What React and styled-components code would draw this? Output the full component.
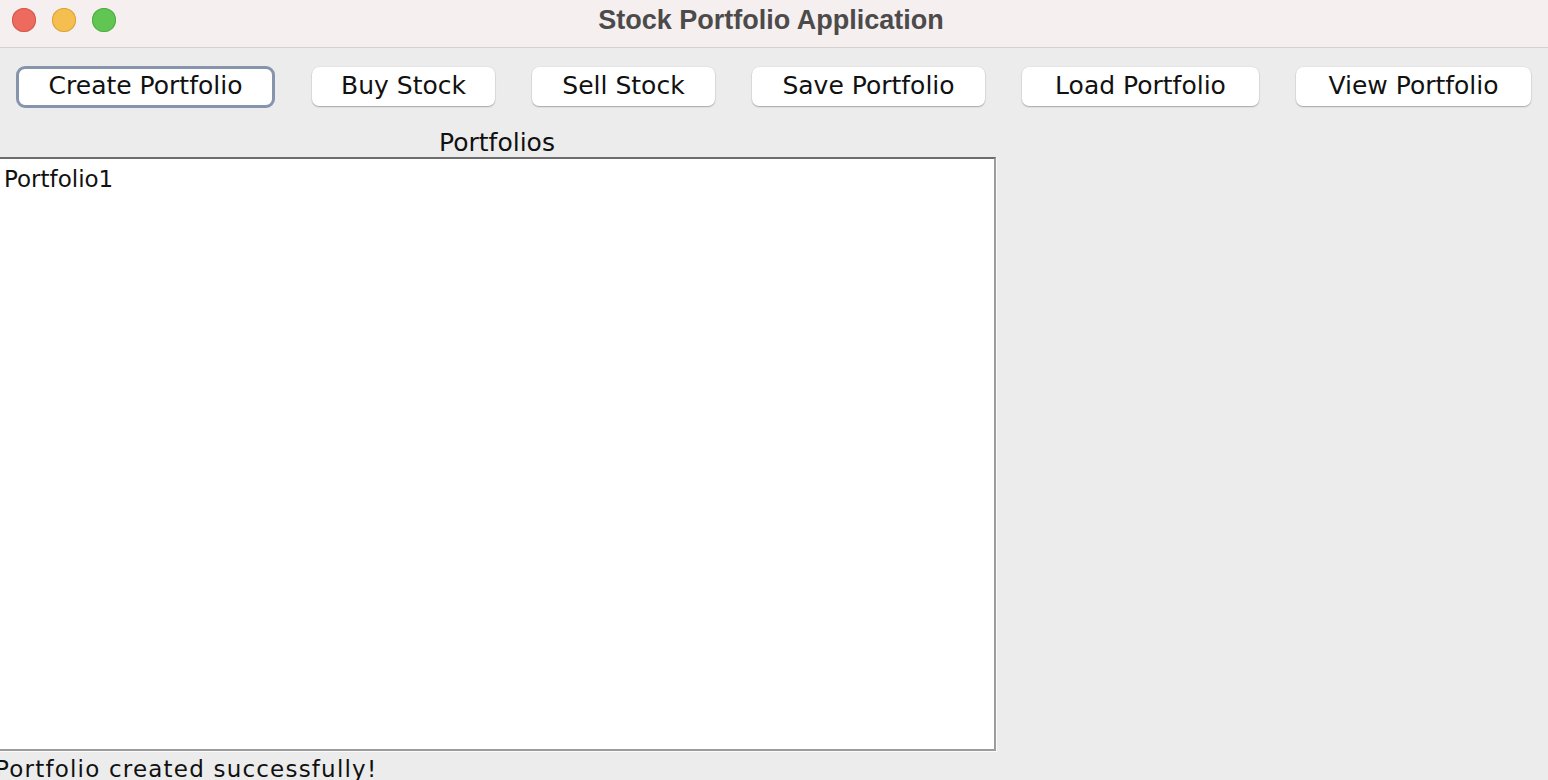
import React, { useState } from "react";
import styled, { createGlobalStyle } from "styled-components";

const GlobalStyle = createGlobalStyle`
  html, body {
    margin: 0;
    padding: 0;
    height: 100%;
    overflow: hidden;
    background: #ececec;
  }
  #root {
    height: 100%;
  }
`;

const Window = styled.div`
  display: flex;
  flex-direction: column;
  width: 1548px;
  height: 780px;
  background: #ececec;
  font-family: "DejaVu Sans", "Liberation Sans", sans-serif;
  color: #111;
  overflow: hidden;
`;

const TitleBar = styled.div`
  position: relative;
  display: flex;
  align-items: center;
  justify-content: center;
  height: 47px;
  flex-shrink: 0;
  background: #f5efef;
  border-bottom: 1px solid #d4d0d0;
`;

const Lights = styled.div`
  position: absolute;
  left: 12px;
  top: 8px;
  display: flex;
  gap: 16px;
`;

const Light = styled.span`
  width: 24px;
  height: 24px;
  border-radius: 50%;
  background: ${(p) => p.$color};
  box-shadow: inset 0 0 0 1px ${(p) => p.$edge};
`;

const Title = styled.div`
  font-family: "Liberation Sans", Arial, sans-serif;
  font-weight: bold;
  font-size: 27px;
  color: #4c4a4a;
  margin-left: -6px;
  margin-top: -7px;
`;

const Toolbar = styled.div`
  display: flex;
  align-items: center;
  gap: 37px;
  padding: 18px 0 0 16px;
  height: 41px;
  flex-shrink: 0;
`;

const Button = styled.button`
  box-sizing: border-box;
  width: ${(p) => p.$w}px;
  height: ${(p) => (p.$focused ? 42 : 39)}px;
  background: #fff;
  border: ${(p) => (p.$focused ? "3px solid #8795ac" : "none")};
  border-radius: ${(p) => (p.$focused ? 9 : 7)}px;
  box-shadow: ${(p) =>
    p.$focused ? "none" : "0 1px 1.5px rgba(0,0,0,0.28), 0 0 0 0.5px rgba(0,0,0,0.06)"};
  font-family: "DejaVu Sans", sans-serif;
  font-size: 25px;
  color: #111;
  padding: 0 0 2px;
  cursor: pointer;
  white-space: nowrap;
`;

const Content = styled.div`
  display: flex;
  flex-direction: column;
  width: 998px;
  margin-left: -2px;
  flex: 1;
  min-height: 0;
`;

const ListLabel = styled.div`
  text-align: center;
  font-size: 25px;
  height: 27px;
  line-height: 26px;
  margin-top: 23px;
  flex-shrink: 0;
`;

const ListBox = styled.div`
  box-sizing: border-box;
  height: 594px;
  flex-shrink: 0;
  background: #fff;
  border-top: 2px solid #6d6d6d;
  border-left: 2px solid #6d6d6d;
  border-right: 2px solid #9c9c9c;
  border-bottom: 2px solid #9c9c9c;
  box-shadow: 1px 1px 0 #fafafa;
  padding: 6px 0 0 4px;
`;

const ListItem = styled.div`
  font-size: 23px;
  line-height: 28px;
  color: #111;
`;

const Status = styled.div`
  flex-shrink: 0;
  font-size: 23px;
  line-height: 28px;
  letter-spacing: 1.2px;
  margin-left: -3px;
  margin-top: 4px;
  white-space: nowrap;
`;

const buttons = [
  { label: "Create Portfolio", w: 259, focused: true },
  { label: "Buy Stock", w: 183 },
  { label: "Sell Stock", w: 183 },
  { label: "Save Portfolio", w: 233 },
  { label: "Load Portfolio", w: 237 },
  { label: "View Portfolio", w: 235 },
];

const App = () => {
  const [portfolios] = useState(["Portfolio1"]);

  return (
    <>
      <GlobalStyle />
      <Window>
        <TitleBar>
          <Lights>
            <Light $color="#ed6a5e" $edge="#d6574c" />
            <Light $color="#f5bf4f" $edge="#d9a33d" />
            <Light $color="#61c554" $edge="#4fae43" />
          </Lights>
          <Title>Stock Portfolio Application</Title>
        </TitleBar>

        <Toolbar>
          {buttons.map((b) => (
            <Button key={b.label} $w={b.w} $focused={b.focused}>
              {b.label}
            </Button>
          ))}
        </Toolbar>

        <Content>
          <ListLabel>Portfolios</ListLabel>
          <ListBox>
            {portfolios.map((p) => (
              <ListItem key={p}>{p}</ListItem>
            ))}
          </ListBox>
          <Status>Portfolio created successfully!</Status>
        </Content>
      </Window>
    </>
  );
};

export default App;
